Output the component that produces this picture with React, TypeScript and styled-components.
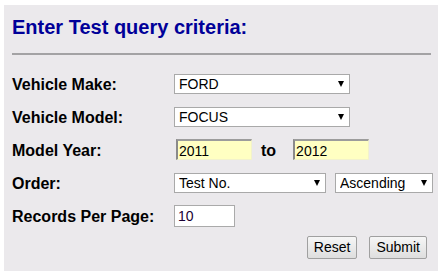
import styled, { createGlobalStyle } from "styled-components";

const GlobalStyle = createGlobalStyle`
    body {
        margin: 0;
        background: #ffffff;
        font-family: "Liberation Sans", Arial, sans-serif;
    }
`

const App = () => {
    return (
        <>
            <GlobalStyle />
            <Panel>
                <Heading>Enter Test query criteria:</Heading>
                <Divider />
                <Form>
                    <Label>Vehicle Make:</Label>
                    <Field>
                        <SelectBox width={176}>
                            <Select defaultValue="FORD">
                                <option>FORD</option>
                            </Select>
                            <Arrow />
                        </SelectBox>
                    </Field>

                    <Label>Vehicle Model:</Label>
                    <Field>
                        <SelectBox width={176}>
                            <Select defaultValue="FOCUS">
                                <option>FOCUS</option>
                            </Select>
                            <Arrow />
                        </SelectBox>
                    </Field>

                    <Label>Model Year:</Label>
                    <Field>
                        <YearInput defaultValue="2011" />
                        <ToText>to</ToText>
                        <YearInput defaultValue="2012" />
                    </Field>

                    <Label>Order:</Label>
                    <Field>
                        <SelectBox width={152}>
                            <Select defaultValue="Test No.">
                                <option>Test No.</option>
                            </Select>
                            <Arrow />
                        </SelectBox>
                        <SelectBox width={98}>
                            <Select defaultValue="Ascending">
                                <option>Ascending</option>
                            </Select>
                            <Arrow />
                        </SelectBox>
                    </Field>

                    <Label>Records Per Page:</Label>
                    <Field>
                        <TextInput defaultValue="10" />
                    </Field>
                </Form>
                <Buttons>
                    <Button type="button">Reset</Button>
                    <Button type="button">Submit</Button>
                </Buttons>
            </Panel>
        </>
    )
}

const Panel = styled.div`
    margin: 5px 0 0 4px;
    width: 434px;
    box-sizing: border-box;
    padding: 11px 7px 9px 8px;
    background-color: #ebe9ec;
`
const Heading = styled.h1`
    margin: 0;
    font-size: 20px;
    line-height: 23px;
    font-weight: bold;
    color: #000099;
`
const Divider = styled.div`
    margin-top: 14px;
    height: 0;
    border-top: 2px solid #a3a2a4;
`
const Form = styled.div`
    margin-top: 12px;
    display: grid;
    grid-template-columns: 162px 1fr;
    grid-auto-rows: 33px;
    align-items: center;
`
const Label = styled.div`
    padding-top: 2px;
    font-size: 16px;
    font-weight: bold;
    color: #000000;
`
const Field = styled.div`
    display: flex;
    align-items: center;
    gap: 9px;
`
const SelectBox = styled.div<{ width: number }>`
    position: relative;
    width: ${p => p.width}px;
    height: 20px;
`
const Select = styled.select`
    appearance: none;
    -webkit-appearance: none;
    width: 100%;
    height: 100%;
    box-sizing: border-box;
    margin: 0;
    padding: 0 0 0 4px;
    border: 1px solid #a9a9a9;
    border-radius: 0;
    background: #ffffff;
    font-family: "Liberation Sans", Arial, sans-serif;
    font-size: 14px;
    color: #000000;
    outline: none;
`
const Arrow = styled.span`
    position: absolute;
    right: 6px;
    top: 7px;
    width: 0;
    height: 0;
    border-left: 3.5px solid transparent;
    border-right: 3.5px solid transparent;
    border-top: 6px solid #000000;
    pointer-events: none;
`
const YearInput = styled.input`
    width: 76px;
    height: 21px;
    box-sizing: border-box;
    margin: 0 0 0 2px;
    padding: 1px 0 0 1px;
    border-style: solid;
    border-width: 2px 1px 1px 2px;
    border-color: #9c9c9c #f2f2cc #f2f2cc #8a8a8a;
    background: #ffffc2;
    font-family: "Liberation Sans", Arial, sans-serif;
    font-size: 14px;
    color: #000000;
    outline: none;
`
const ToText = styled.span`
    margin: 2px 6px 0 0;
    font-size: 16px;
    font-weight: bold;
    color: #000000;
`
const TextInput = styled.input`
    width: 61px;
    height: 22px;
    box-sizing: border-box;
    margin: 0;
    padding: 0 0 0 3px;
    border: 1px solid #aaaaaa;
    background: #ffffff;
    font-family: "Liberation Sans", Arial, sans-serif;
    font-size: 14px;
    color: #1a0033;
    outline: none;
`
const Buttons = styled.div`
    height: 30px;
    display: flex;
    justify-content: flex-end;
    align-items: center;
    gap: 12px;
    padding-right: 4px;
`
const Button = styled.button`
    height: 23px;
    margin: 0;
    padding: 0 6px;
    border: 1px solid #a0a0a0;
    border-radius: 2px;
    background: linear-gradient(#f6f6f6, #dedede);
    font-family: "Liberation Sans", Arial, sans-serif;
    font-size: 14px;
    color: #000000;
`

export default App;
